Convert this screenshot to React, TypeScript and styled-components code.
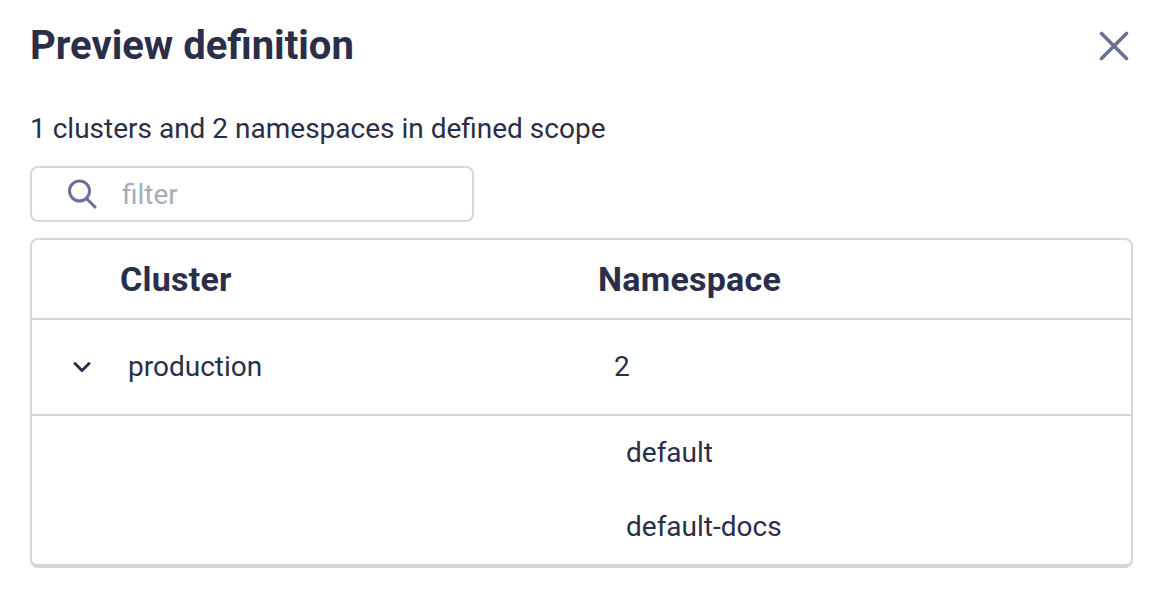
import React from 'react';
import styled, { createGlobalStyle } from 'styled-components';

const GlobalStyle = createGlobalStyle`
	html, body {
		margin: 0;
		padding: 0;
		background: #fff;
	}
	body {
		font-family: Roboto, 'Liberation Sans', sans-serif;
		color: #2b2e48;
	}
`;

const Drawer = styled.div`
	width: 1160px;
	height: 592px;
	box-sizing: border-box;
	padding: 22px 27px 0 30px;
	overflow: hidden;
`;

const Header = styled.div`
	display: flex;
	align-items: center;
	justify-content: space-between;
	height: 48px;
`;

const Title = styled.h2`
	margin: 0;
	font-size: 40px;
	line-height: 48px;
	font-weight: 700;
`;

const CloseButton = styled.button`
	display: flex;
	padding: 0;
	margin-right: 4px;
	border: 0;
	background: none;
	color: #6b7194;
`;

const Summary = styled.p`
	margin: 40px 0 0;
	font-size: 28px;
	line-height: 38px;
`;

const FilterBox = styled.label`
	display: flex;
	align-items: center;
	box-sizing: border-box;
	width: 444px;
	height: 56px;
	margin-top: 18px;
	padding-left: 35px;
	border: 2px solid #d3d6e0;
	border-radius: 8px;
`;

const FilterInput = styled.input`
	flex: 1;
	min-width: 0;
	margin-left: 25px;
	padding: 0;
	border: 0;
	outline: 0;
	font-family: inherit;
	font-size: 28px;
	color: #2b2e48;

	&::placeholder {
		color: #a9acbc;
		opacity: 1;
	}
`;

const TableCard = styled.div`
	box-sizing: border-box;
	height: 330px;
	margin-top: 16px;
	border: 2px solid #d3d6e0;
	border-bottom-width: 4px;
	border-radius: 8px;
`;

const Row = styled.div<{ $height: number; $ruled?: boolean }>`
	display: grid;
	grid-template-columns: 88px 478px 1fr;
	align-items: center;
	height: ${(p) => p.$height}px;
	box-sizing: border-box;
	border-bottom: ${(p) => (p.$ruled ? '2px solid #d3d6e0' : '0')};
`;

const HeadCell = styled.div`
	font-size: 34px;
	font-weight: 700;
	letter-spacing: 0.25px;
`;

const Cell = styled.div<{ $indent?: number }>`
	padding-left: ${(p) => p.$indent ?? 0}px;
	font-size: 28px;
	line-height: 38px;
`;

const Chevron = styled.span`
	display: flex;
	justify-content: flex-end;
	padding-right: 29px;
	color: #2b2e48;
`;

const NestedRows = styled.div`
	padding-top: 0;
`;

const App = () => (
	<>
		<GlobalStyle />
		<Drawer>
			<Header>
				<Title>Preview definition</Title>
				<CloseButton aria-label="Close">
					<svg width="30" height="30" viewBox="0 0 30 30" fill="none" stroke="currentColor" strokeWidth="3.6" strokeLinecap="round">
						<path d="M2.5 2.5 27.5 27.5M27.5 2.5 2.5 27.5" />
					</svg>
				</CloseButton>
			</Header>
			<Summary>1 clusters and 2 namespaces in defined scope</Summary>
			<FilterBox>
				<svg width="30" height="30" viewBox="0 0 30 30" fill="none" stroke="#6b7194" strokeWidth="3" strokeLinecap="round">
					<circle cx="12.5" cy="12" r="10" />
					<path d="M19.5 19.5 28 28" />
				</svg>
				<FilterInput placeholder="filter" />
			</FilterBox>
			<TableCard>
				<Row $height={80} $ruled>
					<span />
					<HeadCell>Cluster</HeadCell>
					<HeadCell>Namespace</HeadCell>
				</Row>
				<Row $height={96} $ruled>
					<Chevron>
						<svg width="18" height="12" viewBox="0 0 18 12" fill="none" stroke="currentColor" strokeWidth="3" strokeLinecap="round" strokeLinejoin="round">
							<path d="M2 2.5 9 9.5 16 2.5" />
						</svg>
					</Chevron>
					<Cell $indent={8}>production</Cell>
					<Cell $indent={16}>2</Cell>
				</Row>
				<NestedRows>
					<Row $height={74}>
						<span />
						<span />
						<Cell $indent={28}>default</Cell>
					</Row>
					<Row $height={74}>
						<span />
						<span />
						<Cell $indent={28}>default-docs</Cell>
					</Row>
				</NestedRows>
			</TableCard>
		</Drawer>
	</>
);

export default App;
